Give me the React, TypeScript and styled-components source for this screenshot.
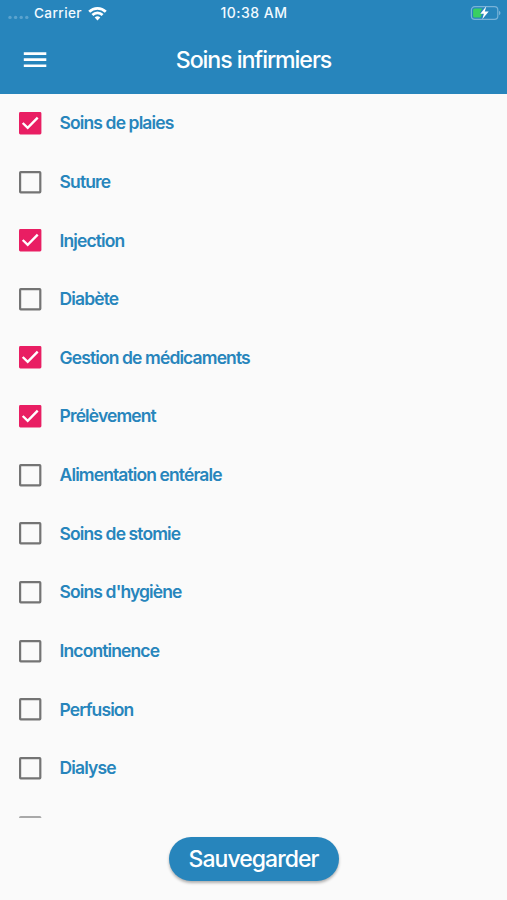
import React, { useState } from "react";
import styled, { createGlobalStyle } from "styled-components";

const BLUE = "#2785bc";
const PINK = "#e91e63";
const ROW_HEIGHT = 58.64;

const GlobalStyle = createGlobalStyle`
  *, *::before, *::after { box-sizing: border-box; }
  body {
    margin: 0;
    background: #fafafa;
    font-family: Inter, "Liberation Sans", sans-serif;
  }
`;

const Screen = styled.div`
  display: flex;
  flex-direction: column;
  width: 507px;
  height: 900px;
  overflow: hidden;
  background: #fafafa;
`;

const Header = styled.header`
  flex: none;
  height: 93.6px;
  background: ${BLUE};
  color: #fff;
`;

const StatusBar = styled.div`
  display: grid;
  grid-template-columns: 1fr auto 1fr;
  align-items: center;
  height: 26px;
  padding: 0 6px 0 8px;
  color: #f2faff;
  font-size: 13.6px;
  font-weight: 500;
  line-height: 26px;
`;

const StatusSide = styled.div<{ $end?: boolean }>`
  display: flex;
  align-items: center;
  justify-content: ${(p) => (p.$end ? "flex-end" : "flex-start")};
`;

const Carrier = styled.span`
  margin: 0 6px 0 5px;
  letter-spacing: 0.4px;
`;

const Clock = styled.span`
  margin-right: 1px;
  font-size: 14px;
  letter-spacing: 0.5px;
`;

const TitleBar = styled.div`
  display: grid;
  grid-template-columns: 70px 1fr 70px;
  align-items: center;
  height: 68px;
`;

const MenuButton = styled.button`
  display: flex;
  align-items: center;
  justify-content: center;
  height: 48px;
  padding: 0;
  border: 0;
  background: none;
  color: #fff;
`;

const Title = styled.h1`
  margin: 0;
  text-align: center;
  font-size: 23.2px;
  font-weight: 500;
  letter-spacing: -1.08px;
  line-height: 30px;
`;

const List = styled.ul`
  flex: none;
  height: 724px;
  margin: 0;
  padding: 0;
  overflow: hidden;
  list-style: none;
`;

const Row = styled.li<{ $faded?: boolean }>`
  height: ${ROW_HEIGHT}px;
  padding-top: ${(p) => (p.$faded ? 1 : 0)}px;
  opacity: ${(p) => (p.$faded ? 0.6 : 1)};
`;

const RowButton = styled.button`
  display: flex;
  align-items: center;
  gap: 15.6px;
  width: 100%;
  height: ${ROW_HEIGHT}px;
  padding: 0 0 0 16px;
  border: 0;
  background: none;
  text-align: left;
`;

const Label = styled.span`
  padding-top: 0.8px;
  color: ${BLUE};
  font-family: Inter, "Liberation Sans", sans-serif;
  font-size: 17.5px;
  font-weight: 600;
  letter-spacing: -0.89px;
  line-height: 24px;
  white-space: nowrap;
`;

const Footer = styled.footer`
  display: flex;
  flex: 1;
  align-items: flex-start;
  justify-content: center;
  padding-top: 19px;
`;

const SaveButton = styled.button`
  width: 170px;
  height: 44px;
  padding: 0;
  border: 0;
  border-radius: 22px;
  background: ${BLUE};
  box-shadow: 0 2px 3px rgba(0, 0, 0, 0.3);
  color: #fff;
  font-family: Inter, "Liberation Sans", sans-serif;
  font-size: 23px;
  font-weight: 500;
  letter-spacing: -0.95px;
  line-height: 44px;
`;

const SignalIcon = () => (
  <svg width="21" height="18" viewBox="0 0 21 18" fill="#7fb8db">
    {[2, 7.6, 13.2, 18.8].map((cx) => (
      <circle key={cx} cx={cx} cy="13.4" r="1.7" opacity="0.6" />
    ))}
  </svg>
);

const WifiIcon = () => (
  <svg width="19" height="15" viewBox="0 0 19 15" fill="none" stroke="#fff" strokeWidth="2.7">
    <path d="M1.2 5.7a11.8 11.8 0 0 1 16.6 0" />
    <path d="M4.4 9a7.2 7.2 0 0 1 10.2 0" />
    <path d="M9.5 14.4 6.7 11.5a4 4 0 0 1 5.6 0Z" fill="#fff" stroke="none" />
  </svg>
);

const BatteryIcon = () => (
  <svg width="31" height="16" viewBox="0 0 31 16">
    <rect x="1.4" y="1.6" width="26.4" height="12.8" rx="3.4" fill="none" stroke="#79b3d8" strokeWidth="1.2" />
    <path d="M29 5.8c2 .8 2 3.6 0 4.4Z" fill="#79b3d8" />
    <path
      d="M4.6 3.4H12L9.8 8.5H12l-1.4 4.1h-6A1.5 1.5 0 0 1 3.1 11.1V4.9A1.5 1.5 0 0 1 4.6 3.4Z"
      fill="#39cf62"
    />
    <path d="M16.3 1.3 10.3 8.8h3.6L12.3 14.3l6.4-7.800h-3.900Z" fill="#fff" />
  </svg>
);

const MenuIcon = () => (
  <svg width="30" height="30" viewBox="0 0 30 30" fill="currentColor">
    <path d="M3.8 7.2h22.5v2.7H3.8zM3.8 13.3h22.5v2.7H3.8zM3.8 19.4h22.5v2.7H3.8z" />
  </svg>
);

const CheckIcon = ({ checked }: { checked: boolean }) => (
  <svg width="28" height="28" viewBox="0 0 28 28" fill="none">
    {checked ? (
      <>
        <rect x="3" y="3" width="22.4" height="22.4" rx="1.4" fill={PINK} />
        <path d="m6.7 14 5 4.9 10-10.2" stroke="#fff" strokeWidth="2.4" />
      </>
    ) : (
      <rect x="4.1" y="4.1" width="20.2" height="20.2" rx="0.6" stroke="#747474" strokeWidth="2.2" />
    )}
  </svg>
);

const initialItems = [
  { label: "Soins de plaies", checked: true },
  { label: "Suture", checked: false },
  { label: "Injection", checked: true },
  { label: "Diabète", checked: false },
  { label: "Gestion de médicaments", checked: true },
  { label: "Prélèvement", checked: true },
  { label: "Alimentation entérale", checked: false },
  { label: "Soins de stomie", checked: false },
  { label: "Soins d'hygiène", checked: false },
  { label: "Incontinence", checked: false },
  { label: "Perfusion", checked: false },
  { label: "Dialyse", checked: false },
  { label: "", checked: false },
];

export default function App() {
  const [items, setItems] = useState(initialItems);
  const toggle = (index: number) =>
    setItems((prev) => prev.map((it, i) => (i === index ? { ...it, checked: !it.checked } : it)));

  return (
    <>
      <GlobalStyle />
      <Screen>
        <Header>
          <StatusBar>
            <StatusSide>
              <SignalIcon />
              <Carrier>Carrier</Carrier>
              <WifiIcon />
            </StatusSide>
            <Clock>10:38 AM</Clock>
            <StatusSide $end>
              <BatteryIcon />
            </StatusSide>
          </StatusBar>
          <TitleBar>
            <MenuButton>
              <MenuIcon />
            </MenuButton>
            <Title>Soins infirmiers</Title>
          </TitleBar>
        </Header>
        <List>
          {items.map((item, i) => (
            <Row key={i} $faded={i === items.length - 1}>
              <RowButton role="checkbox" aria-checked={item.checked} onClick={() => toggle(i)}>
                <CheckIcon checked={item.checked} />
                <Label>{item.label}</Label>
              </RowButton>
            </Row>
          ))}
        </List>
        <Footer>
          <SaveButton>Sauvegarder</SaveButton>
        </Footer>
      </Screen>
    </>
  );
}
